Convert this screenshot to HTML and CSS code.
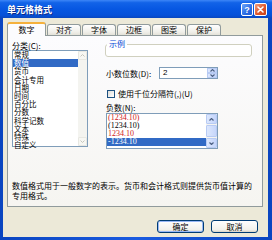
FILE: index.html
```html
<!DOCTYPE html>
<html lang="zh-CN">
<head>
    <meta charset="UTF-8">
    <title>单元格格式</title>
    <link rel="stylesheet" href="styles.css">
</head>
<body>
    <div class="window">
        <div class="titlebar">
            <span class="title">单元格格式</span>
            <div class="title-btns">
                <span class="tbtn tbtn-help">?</span>
                <span class="tbtn tbtn-close">
                    <svg width="7" height="7" viewBox="0 0 7 7"><path d="M1 1L6 6M6 1L1 6" stroke="#fff" stroke-width="1.6" stroke-linecap="round"/></svg>
                </span>
            </div>
        </div>

        <div class="client">
            <div class="tabs">
                <span class="tab active">数字</span>
                <span class="tab">对齐</span>
                <span class="tab">字体</span>
                <span class="tab">边框</span>
                <span class="tab">图案</span>
                <span class="tab">保护</span>
            </div>

            <div class="panel">
                <div class="cols">
                    <div class="col-left">
                        <div class="label">分类(C):</div>
                        <div class="listbox cat-list">
                            <ul class="items">
                                <li>常规</li>
                                <li class="sel">数值</li>
                                <li>货币</li>
                                <li>会计专用</li>
                                <li>日期</li>
                                <li>时间</li>
                                <li>百分比</li>
                                <li>分数</li>
                                <li>科学记数</li>
                                <li>文本</li>
                                <li>特殊</li>
                                <li>自定义</li>
                            </ul>
                            <div class="vscroll disabled">
                                <span class="sbtn"><svg width="5" height="3" viewBox="0 0 5 3"><path d="M0.5 2.5L2.5 0.5L4.5 2.5" fill="none" stroke="currentColor" stroke-width="1"/></svg></span>
                                <span class="strack"></span>
                                <span class="sbtn"><svg width="5" height="3" viewBox="0 0 5 3"><path d="M0.5 0.5L2.5 2.5L4.5 0.5" fill="none" stroke="currentColor" stroke-width="1"/></svg></span>
                            </div>
                        </div>
                    </div>

                    <div class="col-right">
                        <fieldset class="sample">
                            <legend>示例</legend>
                            <div class="sample-val"></div>
                        </fieldset>

                        <div class="row decimals">
                            <span class="row-label">小数位数(D):</span>
                            <div class="spin">
                                <span class="spin-val">2</span>
                                <span class="spin-btns">
                                    <span class="spin-btn"><svg width="5" height="3" viewBox="0 0 5 3"><path d="M0.5 2.5L2.5 0.5L4.5 2.5" fill="none" stroke="#4d6185" stroke-width="1.1"/></svg></span>
                                    <span class="spin-btn"><svg width="5" height="3" viewBox="0 0 5 3"><path d="M0.5 0.5L2.5 2.5L4.5 0.5" fill="none" stroke="#4d6185" stroke-width="1.1"/></svg></span>
                                </span>
                            </div>
                        </div>

                        <div class="row check">
                            <span class="checkbox"></span>
                            <span class="check-label">使用千位分隔符(,)(U)</span>
                        </div>

                        <div class="label neg-label">负数(N):</div>
                        <div class="listbox neg-list">
                            <ul class="items">
                                <li class="red">(1234.10)</li>
                                <li>(1234.10)</li>
                                <li class="red">1234.10</li>
                                <li class="sel">-1234.10</li>
                            </ul>
                            <div class="vscroll">
                                <span class="sbtn"><svg width="5" height="3" viewBox="0 0 5 3"><path d="M0.5 2.5L2.5 0.5L4.5 2.5" fill="none" stroke="currentColor" stroke-width="1.2"/></svg></span>
                                <span class="strack"><span class="thumb"></span></span>
                                <span class="sbtn"><svg width="5" height="3" viewBox="0 0 5 3"><path d="M0.5 0.5L2.5 2.5L4.5 0.5" fill="none" stroke="currentColor" stroke-width="1.2"/></svg></span>
                            </div>
                        </div>
                    </div>
                </div>

                <p class="desc">数值格式用于一般数字的表示。货币和会计格式则提供货币值计算的专用格式。</p>
            </div>

            <div class="buttons">
                <button class="btn default">确定</button>
                <button class="btn">取消</button>
            </div>
        </div>
    </div>
</body>
</html>
```

FILE: styles.css
```css
/* Ventana estilo XP */
* {
    margin: 0;
    padding: 0;
    box-sizing: border-box;
}

body {
    width: 272px;
    height: 240px;
    overflow: hidden;
    font-family: "Noto Sans CJK SC", "Liberation Sans", sans-serif;
    font-size: 8px;
    color: #000;
    background: #0b4dc8;
}

.window {
    width: 272px;
    height: 240px;
    display: flex;
    flex-direction: column;
    background: linear-gradient(90deg, #0a45c0, #1a5be0 50%, #0a45c0);
}

/* Barra de titulo */
.titlebar {
    height: 18px;
    display: flex;
    align-items: center;
    justify-content: space-between;
    padding: 1px 5px 0 7px;
    background: linear-gradient(#3d86f7 0%, #1263e8 15%, #0757e2 50%, #0651d8 85%, #0a47be 100%);
}

.title {
    color: #fff;
    font-size: 9px;
    font-weight: bold;
    line-height: 10px;
    text-shadow: 1px 1px 0 #0b2a8a;
}

.title-btns {
    display: flex;
    gap: 1px;
}

.tbtn {
    width: 12px;
    height: 13px;
    border: 1px solid #fff;
    border-radius: 2px;
    display: flex;
    align-items: center;
    justify-content: center;
    color: #fff;
    font-family: "Liberation Sans", sans-serif;
    font-weight: bold;
    font-size: 9px;
}

.tbtn-help {
    background: linear-gradient(135deg, #6fa6fb, #2a6be4 60%, #1d58d0);
}

.tbtn-close {
    width: 13px;
    background: linear-gradient(135deg, #f0a080, #e0572c 55%, #c8401a);
}

/* Area de cliente */
.client {
    flex: 1;
    margin: 0 4px 3px 3px;
    background: #ece9d8;
    display: flex;
    flex-direction: column;
}

.tabs {
    height: 17px;
    display: flex;
    align-items: flex-end;
    gap: 1px;
    padding-left: 4px;
}

.tab {
    width: 34px;
    height: 11px;
    border: 1px solid #919b9c;
    border-bottom: none;
    border-radius: 3px 3px 0 0;
    background: linear-gradient(#fefefe, #f0efe9 70%, #e3e1d8);
    text-align: center;
    line-height: 10px;
}

.tab.active {
    width: 39px;
    height: 14px;
    margin-bottom: -1px;
    position: relative;
    z-index: 1;
    border-top: 2px solid #f5b13c;
    background: #fcfcfe;
    line-height: 12px;
}

.panel {
    height: 172px;
    margin: 0 5px 0 4px;
    border: 1px solid #919b9c;
    background: linear-gradient(#fcfcfe, #f6f5f1);
    padding: 5px 0 0 4px;
}

.cols {
    display: flex;
}

.col-left {
    width: 76px;
}

.col-right {
    width: 147px;
    margin-left: 17px;
}

.label {
    line-height: 9px;
    height: 9px;
}

/* Listas */
.listbox {
    display: flex;
    border: 1px solid #7f9db9;
    background: #fff;
}

.items {
    flex: 1;
    list-style: none;
}

.cat-list {
    height: 97px;
}

.cat-list li {
    font-size: 7.5px;
    line-height: 8.2px;
    height: 8.2px;
    padding-left: 1px;
}

.items li.sel {
    background: #316ac5;
    color: #fff;
}

.vscroll {
    width: 9px;
    display: flex;
    flex-direction: column;
    background: #f4f4f0;
}

.sbtn {
    height: 9px;
    display: flex;
    align-items: center;
    justify-content: center;
    border: 1px solid #b8cbf4;
    border-radius: 1px;
    background: linear-gradient(90deg, #dce7fd, #c3d4fb);
    color: #4d6185;
}

.strack {
    flex: 1;
    display: flex;
    padding: 1px 0;
}

.vscroll.disabled .sbtn {
    border-color: #e8e8e2;
    background: #f7f7f3;
    color: #c6c6bd;
}

.thumb {
    flex: 1;
    border: 1px solid #b8cbf4;
    border-radius: 1px;
    background: linear-gradient(90deg, #dce7fd, #c6d6fb);
}

/* Columna derecha */
.sample {
    margin-top: -1px;
    height: 17px;
    border: 1px solid #d0d0bf;
    border-radius: 3px;
    background: #fff;
}

.sample legend {
    margin-left: 1px;
    padding: 0 2px;
    line-height: 8px;
    color: #0046d5;
}

.row {
    display: flex;
    align-items: center;
}

.decimals {
    margin-top: 10px;
    height: 12px;
}

.row-label {
    width: 54px;
    padding-left: 1px;
}

.spin {
    width: 59px;
    height: 12px;
    display: flex;
    border: 1px solid #7f9db9;
    background: #fff;
}

.spin-val {
    flex: 1;
    padding-left: 3px;
    line-height: 10px;
    font-family: "Liberation Sans", sans-serif;
}

.spin-btns {
    width: 10px;
    display: flex;
    flex-direction: column;
}

.spin-btn {
    flex: 1;
    display: flex;
    align-items: center;
    justify-content: center;
    border: 1px solid #b8cbf4;
    background: linear-gradient(90deg, #dce7fd, #c3d4fb);
}

.check {
    margin-top: 11px;
    height: 8px;
}

.checkbox {
    width: 8px;
    height: 8px;
    margin-left: 2px;
    border: 1px solid #1c5180;
    background: linear-gradient(135deg, #dcdcd7, #fff);
}

.check-label {
    margin-left: 3px;
    line-height: 8px;
}

.neg-label {
    margin-top: 6px;
    padding-left: 1px;
    line-height: 8px;
    height: 8px;
}

.neg-list {
    width: 112px;
    height: 36px;
    margin: 1px 0 0 1px;
}

.neg-list li {
    height: 8px;
    line-height: 8px;
    padding-left: 1px;
    font-family: "Liberation Serif", serif;
    font-size: 8px;
}

.neg-list li.red {
    color: #d01818;
}

.neg-list .vscroll {
    width: 11px;
}

.neg-list .sbtn {
    height: 10px;
}

.desc {
    width: 244px;
    margin-top: 32px;
    line-height: 9.5px;
}

/* Botones */
.buttons {
    display: flex;
    justify-content: flex-end;
    gap: 7px;
    margin-top: 13px;
    padding-right: 10px;
}

.btn {
    width: 47px;
    height: 13px;
    font-family: inherit;
    font-size: 8px;
    line-height: 11px;
    color: #000;
    border: 1px solid #003c74;
    border-radius: 3px;
    background: linear-gradient(#ffffff, #f2f1eb 80%, #d8d2c6);
}

.btn.default {
    box-shadow: inset 0 0 0 1px #98b8f6;
}
```
